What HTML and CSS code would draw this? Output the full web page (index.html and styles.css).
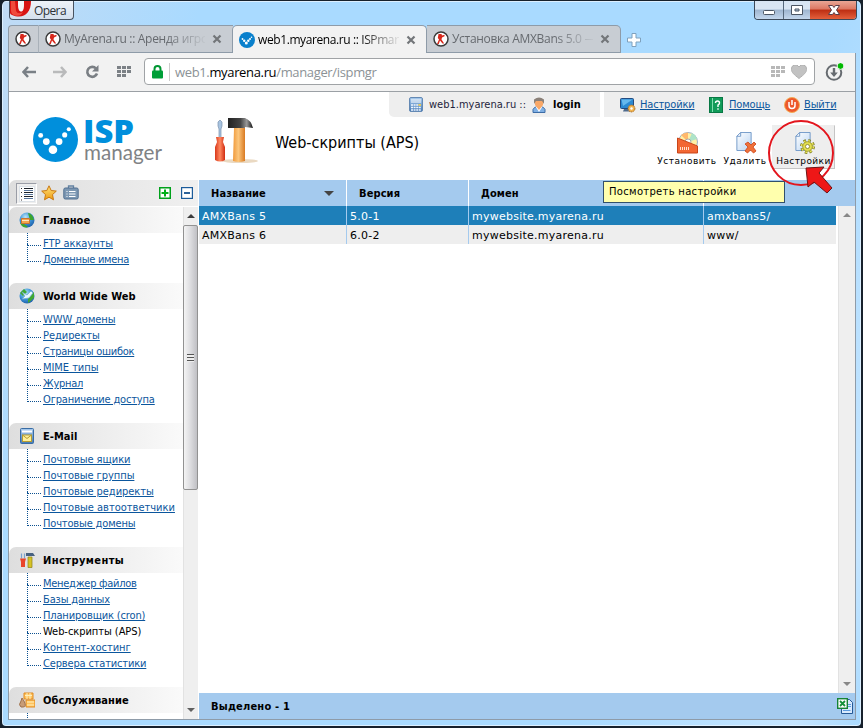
FILE: index.html
```html
<!DOCTYPE html>
<html lang="ru">
<head>
<meta charset="utf-8">
<title>ISPmanager</title>
<link rel="stylesheet" href="styles.css">
</head>
<body>
<svg width="0" height="0" class="defs" aria-hidden="true">
<defs>
<linearGradient id="wood" x1="0" x2="1"><stop offset="0" stop-color="#f09a3c"/><stop offset=".45" stop-color="#fcc67c"/><stop offset="1" stop-color="#d97a22"/></linearGradient>
<linearGradient id="redh" x1="0" x2="1"><stop offset="0" stop-color="#d8381a"/><stop offset=".5" stop-color="#ff8860"/><stop offset="1" stop-color="#d02c10"/></linearGradient>
<linearGradient id="steel" x1="0" x2="1"><stop offset="0" stop-color="#222"/><stop offset=".5" stop-color="#444"/><stop offset=".75" stop-color="#999"/><stop offset="1" stop-color="#111"/></linearGradient>
<linearGradient id="blue" x1="0" y1="0" x2="0" y2="1"><stop offset="0" stop-color="#a9cbee"/><stop offset="1" stop-color="#4579b5"/></linearGradient>
<linearGradient id="paper" x1="0" y1="0" x2="1" y2="1"><stop offset="0" stop-color="#fff"/><stop offset="1" stop-color="#b9d4f2"/></linearGradient>
<linearGradient id="gold" x1="0" y1="0" x2="0" y2="1"><stop offset="0" stop-color="#ffe27a"/><stop offset="1" stop-color="#ee9c12"/></linearGradient>
<radialGradient id="globe" cx=".4" cy=".3" r=".8"><stop offset="0" stop-color="#b8e4f8"/><stop offset=".5" stop-color="#3c94d8"/><stop offset="1" stop-color="#1a56a0"/></radialGradient>
<symbol id="cs" viewBox="0 0 16 16"><circle cx="8" cy="8" r="7" fill="#fff" stroke="#3a3a3a" stroke-width="1.5"/><path d="M5.500 3h3l.5 1.500 2.500-.8v1.500L9 6.500l-.5 2 2.700 4H9.500L7 9.500 5.800 13H4L6 8.500 4.800 7z" fill="#d8281c"/></symbol>
<symbol id="isp" viewBox="0 0 44 44"><circle cx="22" cy="22" r="22" fill="#008fdc"/><g fill="#fff"><circle cx="7.500" cy="18" r="2.400"/><circle cx="13" cy="24" r="3.300"/><circle cx="19.500" cy="32" r="4.200"/><circle cx="25.500" cy="24" r="3.300"/><circle cx="31" cy="17.500" r="2.500"/><circle cx="35" cy="12" r="2"/></g></symbol>
<symbol id="ispfav" viewBox="0 0 16 16"><circle cx="8" cy="8" r="8" fill="#0a80cc"/><g fill="#fff"><circle cx="3.500" cy="7" r=".9"/><circle cx="5.200" cy="8.800" r="1.200"/><circle cx="7.300" cy="11" r="1.500"/><circle cx="9.300" cy="8.800" r="1.200"/><circle cx="11" cy="7" r="1"/><circle cx="12.500" cy="5.200" r=".8"/></g></symbol>
<symbol id="x" viewBox="0 0 10 10"><path d="M1.500 1.500l7 7m0-7l-7 7" stroke="#737679" stroke-width="2.200" fill="none"/></symbol>
<symbol id="grid" viewBox="0 0 14 11"><path d="M0 0h4v3H0zM5 0h4v3H5zM10 0h4v3h-4zM0 4h4v3H0zM5 4h4v3H5zM10 4h4v3h-4zM0 8h4v3H0zM5 8h4v3H5z" fill="currentColor"/></symbol>
<symbol id="page" viewBox="0 0 16 20"><path d="M4.500.5h11v19H.5V4.500z" fill="url(#paper)" stroke="#7098c8"/><path d="M4.500.5v4h-4z" fill="#fff" stroke="#7098c8"/></symbol>
<symbol id="gear" viewBox="0 0 14 14"><circle cx="7" cy="7" r="5.400" fill="none" stroke="#77771c" stroke-width="3" stroke-dasharray="2.200 2.040"/><circle cx="7" cy="7" r="5.400" fill="none" stroke="#e9e45a" stroke-width="1.600" stroke-dasharray="1.800 2.440"/><circle cx="7" cy="7" r="4.500" fill="#e4df50" stroke="#99952c" stroke-width=".8"/><circle cx="7" cy="7" r="1.900" fill="#fff" stroke="#88852c" stroke-width=".8"/></symbol>
</defs>
</svg>
<div class="window">
  <header class="titlebar">
    <div class="opera-btn"><svg width="22" height="16" viewBox="0 0 22 16"><path d="M0 0h21c0 10-5 15.500-12 15.500C4 15.500 0 13.500 0 12z" fill="#d81414"/><path d="M1 0h4l1 10q2 4 7 1-3 5-8 3.500-4-1-4-5z" fill="#f04a3c"/><path d="M8 0h6v4c0 5-1.500 6.500-3 6.500S8 8.500 8 4z" fill="#f4f7fb"/></svg><span>Opera</span></div>
    <div class="controls">
      <div class="ctl"><svg width="28" height="18"><rect x="8.500" y="9.500" width="11" height="4" rx="1" fill="#fff" stroke="#4c5664"/></svg></div>
      <div class="ctl"><svg width="26" height="18"><path d="M7.500 4.500h11v9h-11zm3.500 3.500v2h4v-2z" fill="#fff" fill-rule="evenodd" stroke="#4c5664"/></svg></div>
      <div class="ctl close"><svg width="46" height="18"><path d="M18.500 4.500h4l1.500 2 1.500-2h4l-3 4.500 3 4.500h-4l-1.500-2-1.500 2h-4l3-4.500z" fill="#fff" stroke="#5a3c46"/></svg></div>
    </div>
  </header>
  <nav class="tabs">
    <div class="tab pinned"><svg width="16" height="16"><use href="#cs"/></svg></div>
    <div class="tab"><svg width="16" height="16"><use href="#cs"/></svg><span class="tab-title">MyArena.ru :: Аренда игро</span><svg class="tx" width="10" height="10"><use href="#x"/></svg></div>
    <div class="tab active"><svg width="16" height="16"><use href="#ispfav"/></svg><span class="tab-title tight">web1.myarena.ru :: ISPmar</span><svg class="tx" width="10" height="10"><use href="#x"/></svg></div>
    <div class="tab last"><svg width="16" height="16"><use href="#cs"/></svg><span class="tab-title">Установка AMXBans 5.0 —</span><svg class="tx" width="10" height="10"><use href="#x"/></svg></div>
    <svg class="plus" width="14" height="14"><path d="M5 .5h4V5h4.500v4H9v4.500H5V9H.5V5H5z" fill="#fff" stroke="#7fa1bd"/></svg>
  </nav>
  <div class="client">
    <div class="toolbar">
      <svg class="back" width="15" height="12"><path d="M6 1L1.500 6 6 11M2 6h12" fill="none" stroke="#7a8086" stroke-width="2.500"/></svg>
      <svg class="fwd" width="15" height="12"><path d="M9 1l4.500 5L9 11M13 6H1" fill="none" stroke="#b9babb" stroke-width="2.500"/></svg>
      <svg class="reload" width="14" height="14"><path d="M11 3.500A5 5 0 1 0 12 8.500" fill="none" stroke="#7a7f84" stroke-width="2.600"/><path d="M13.500 0v6.500H7z" fill="#7a7f84"/></svg>
      <svg class="dial" width="14" height="11"><use href="#grid"/></svg>
      <div class="address">
        <svg class="lock" width="11" height="14"><path d="M2.500 6V4a3 3 0 0 1 6 0v2" fill="none" stroke="#009632" stroke-width="2"/><rect y="5.500" width="11" height="8" rx="1" fill="#009f38"/></svg>
        <span class="url">web1.<b>myarena.ru</b>/manager/ispmgr</span>
        <svg class="dial2" width="14" height="11"><use href="#grid"/></svg>
        <svg width="16" height="14"><path d="M8 13.500C3 9.500.5 7.500.5 4.500A4 4 0 0 1 8 2a4 4 0 0 1 7.500 2.500c0 3-2.500 5-7.500 9z" fill="#c2c2c2" stroke="#b0b0b0"/></svg>
      </div>
      <svg class="download" width="19" height="18"><circle cx="9" cy="9.500" r="7.300" fill="none" stroke="#666b70" stroke-width="2"/><path d="M7.800 5h2.400v4.500h2.600L9 14 5.200 9.500h2.600z" fill="#666b70"/><circle cx="15.500" cy="3" r="3.400" fill="#00b900" stroke="#f2f2f2"/></svg>
    </div>
    <div class="page">
      <div class="top">
        <svg class="logo" width="135" height="50"><use href="#isp" x="1" y="0" width="45" height="45"/><text x="51" y="26" class="logo-isp" textLength="51" lengthAdjust="spacingAndGlyphs">ISP</text><text x="52" y="43" class="logo-man" textLength="78" lengthAdjust="spacingAndGlyphs">manager</text></svg>
        <svg class="tools" width="46" height="50" viewBox="0 0 46 50"><ellipse cx="27" cy="44" rx="18" ry="2" fill="#ead9c2"/><path d="M21 11h11v33q-6 2-12 0z" fill="url(#wood)"/><path d="M15 1h17q6 2 8 10l-8-1v1H15z" fill="url(#steel)"/><path d="M5 5l2-2 2 2v4l-1 3v10H6V12L5 9z" fill="#a8c4e0" stroke="#7890ae" stroke-width=".7"/><path d="M3 20h8l-1 5 2 5v13q-5 3-10 0V30l2-5z" fill="url(#redh)"/></svg>
        <h1>Web-скрипты (APS)</h1>
        <div class="right">
          <div class="userbar">
            <div class="ub who">
              <svg class="calc" width="14" height="15"><rect x=".5" y=".5" width="13" height="14" rx="1.500" fill="url(#blue)" stroke="#6489b4"/><path d="M2 3h10M2 5h10" stroke="#fff"/><path d="M2 8h10M2 10.500h10M2 13h10" stroke="#eff6fe" stroke-width="1.500" stroke-dasharray="2 .6"/><path d="M9.500 8H12" stroke="#efc62c" stroke-width="1.500"/></svg>
              <span>web1.myarena.ru ::</span>
              <svg width="14" height="16"><path d="M1 15.500v-3Q2 10 5 9.500h4q3 .5 4 3v3z" fill="#80b0e4" stroke="#3c6ca6"/><path d="M3.500 9.500L7 15l3.500-5.500z" fill="#fff"/><path d="M3 4h8v4l-4 5-4-5z" fill="#f9a868"/><path d="M2 7V2.500Q7-1.500 12 2.500V7L10 4H4z" fill="#8b8078"/></svg>
              <b>login</b>
            </div>
            <div class="ub links">
              <svg width="16" height="16"><rect x=".5" y="1.500" width="13" height="10" rx="1" fill="#2b89d2" stroke="#234b80"/><path d="M1.500 2.500h11L3 9z" fill="#67b9ed"/><path d="M4 12h6l1 2.500H3z" fill="#506b8c"/><circle cx="11.500" cy="11.500" r="3.400" fill="#f1b450" stroke="#a76b28" stroke-dasharray="1.500 .7"/><circle cx="11.500" cy="11.500" r="1.200" fill="#fff"/></svg><a class="l1">Настройки</a>
              <svg width="14" height="16"><rect x=".5" y=".5" width="13" height="15" fill="#119b59" stroke="#087844"/><path d="M3.500 1v14" stroke="#80dfaf"/><path d="M6.500 6Q6.500 4 8.500 4t2 2q0 1.200-1.500 2v2m0 1.200v1.500" fill="none" stroke="#fff" stroke-width="1.400"/></svg><a class="l2">Помощь</a>
              <svg width="16" height="16"><circle cx="8" cy="8" r="7.500" fill="#ed582c" stroke="#f4ab55"/><path d="M5 5v3.500a3 3 0 0 0 6 0V5M8 3v5" fill="none" stroke="#fff" stroke-width="1.500"/></svg><a class="l3">Выйти</a>
            </div>
          </div>
          <div class="actions">
            <div class="act a1"><svg width="24" height="24"><circle cx="13" cy="11" r="9.500" fill="#fff0a5" stroke="#9eb0c8"/><path d="M13 11L6 4a10 10 0 0 1 7-2.500z" fill="#ffb86c"/><path d="M13 11l4-9q4 2 5 6z" fill="#aee4c8"/><circle cx="13" cy="11" r="3" fill="#fff" stroke="#aaa"/><path d="M2.500 7l20 8v7h-20z" fill="#f36733" stroke="#c94519"/><path d="M5 17.500h9" fill="none" stroke="#ffe3d0" stroke-width="3" stroke-dasharray="1 1"/></svg><span>Установить</span></div>
            <div class="act a2"><svg width="24" height="24"><use href="#page" x="3" y="1" width="16" height="19"/><path d="M12 13l3-2 3 3 3-3 2 2-3 3 3 4-2.500 2-3-3-3 3-2.500-2 3-4z" fill="#ef713a" stroke="#cd4317" stroke-width=".8"/></svg><span>Удалить</span></div>
            <div class="act a3"><svg width="24" height="24"><use href="#page" x="3" y="1" width="16" height="19"/><use href="#gear" x="8" y="8" width="15" height="15"/></svg><span>Настройки</span></div>
          </div>
        </div>
      </div>
      <div class="body">
        <aside class="sidebar">
          <div class="side-tools">
            <div class="pressed"><svg width="16" height="16"><rect x=".5" y=".5" width="15" height="15" fill="#fff" stroke="#dce2e8"/><path d="M5 2.500h9M5 6.500h9M5 10.500h9" stroke="#1d2228" stroke-width="1"/><path d="M5 4.500h9M5 8.500h9M5 12.500h9" stroke="#59789e"/><path d="M2 2.500h1M2 6.500h1M2 10.500h1M2 14h1" stroke="#333"/></svg></div>
            <svg width="16" height="16"><path d="M8 .8l2.200 4.700 5.100.6-3.800 3.500 1 5.200L8 12.200l-4.500 2.600 1-5.200L.7 6.100l5.100-.6z" fill="url(#gold)" stroke="#c97811"/></svg>
            <svg width="16" height="16"><path d="M5.500 3V1h5v2" fill="none" stroke="#6483a2" stroke-width="1.300"/><rect x=".8" y="3" width="14.400" height="11" rx="1.500" fill="#7c97b2" stroke="#506f90"/><path d="M3.500 6.500h1m1.500 0h6.500M3.500 9h1M6 9h6.500M3.500 11.500h1m1.500 0h6.500" stroke="#fff"/></svg>
            <svg class="pm" width="12" height="12"><rect x=".75" y=".75" width="10.500" height="10.500" fill="#fff" stroke="#00a11b" stroke-width="1.500"/><path d="M6 2.500v7M2.500 6h7" stroke="#00b018" stroke-width="2"/></svg>
            <svg width="12" height="12"><rect x=".6" y=".6" width="10.800" height="10.800" fill="#fff" stroke="#1b5b9a" stroke-width="1.200"/><path d="M3 6h6" stroke="#2c6299" stroke-width="2"/></svg>
          </div>
          <div class="side-scroll">
            <div class="tree">
              <section><h2><svg width="16" height="16"><circle cx="8" cy="8" r="7.500" fill="url(#globe)"/><path d="M9 1q5 1 6 7h-4zM1 11l4 1 4 3Q4 17 1 11z" fill="#3da52e"/><path d="M2.500 6.500h8v5h-8z" fill="#f3a64d" stroke="#c97430"/><path d="M3 8.500h7" stroke="#ffe8c0"/></svg>Главное</h2>
                <ul><li><a>FTP аккаунты</a></li><li><a class="tighter">Доменные имена</a></li></ul></section>
              <section><h2><svg width="16" height="16"><circle cx="8" cy="8" r="7.500" fill="url(#globe)"/><path d="M1 5L5 1l3 3-4 4zM9 10l6-6v6l-6 5z" fill="#40a831"/><path d="M3 4l5 3 4-4 2 2-4 5-7 1 3-3z" fill="#e8f7ff" stroke="#6da8cf" stroke-width=".7"/></svg>World Wide Web</h2>
                <ul><li><a class="wider">WWW домены</a></li><li><a>Редиректы</a></li><li><a class="tighter">Страницы ошибок</a></li><li><a>MIME типы</a></li><li><a class="tighter">Журнал</a></li><li><a class="narrow">Ограничение доступа</a></li></ul></section>
              <section><h2><svg width="16" height="16"><rect x="1.500" y=".5" width="13" height="15" rx="1" fill="url(#blue)" stroke="#396ca4"/><path d="M3 3.500h10" stroke="#fff" stroke-width="2"/><rect x="3.500" y="7" width="9" height="6.500" fill="#fff09a" stroke="#b59d31"/><path d="M3.500 7L8 10.500 12.500 7" fill="none" stroke="#b59d31"/></svg>E-Mail</h2>
                <ul><li><a>Почтовые ящики</a></li><li><a>Почтовые группы</a></li><li><a>Почтовые редиректы</a></li><li><a class="even">Почтовые автоответчики</a></li><li><a class="narrow">Почтовые домены</a></li></ul></section>
              <section><h2 class="spaced"><svg width="16" height="16"><path d="M2.500 1.500v5M5.500 1.500v5" stroke="#7ba2d0" stroke-width="1.200"/><path d="M1 6.500h6L6 10v5H2v-5z" fill="#e9452a"/><path d="M9 5h4v10.500H9z" fill="#d6c225" stroke="#8e8119" stroke-width=".7"/><path d="M7 1h7l2 3H7z" fill="#486281"/></svg>Инструменты</h2>
                <ul><li><a class="tighter">Менеджер файлов</a></li><li><a class="narrow">Базы данных</a></li><li><a class="narrow">Планировщик (cron)</a></li><li class="current"><a>Web-скрипты (APS)</a></li><li><a>Контент-хостинг</a></li><li><a class="narrow">Сервера статистики</a></li></ul></section>
              <section><h2><svg width="16" height="16"><path d="M5 1h9v6H5zM7 8h9v7H7z" fill="#ffc35f" stroke="#e18b21"/><path d="M6 3.500h7M8 10h7M8 13h7M8 1v6m3-6v6" stroke="#fff0bc"/><path d="M3 6l2 3q3 6-1 6H2q-3-2 0-6z" fill="#c89c76" stroke="#9e704c"/></svg>Обслуживание</h2><ul class="tail"><li></li></ul></section>
            </div>
            <div class="bar"><i class="up"></i><div class="thumb"><b></b></div><i class="down"></i></div>
          </div>
        </aside>
        <main>
          <div class="thead"><div>Название<i class="sort"></i></div><div>Версия</div><div>Домен</div><div></div></div>
          <div class="listing">
            <div class="rows">
              <div class="row sel"><span>AMXBans 5</span><span>5.0-1</span><span>mywebsite.myarena.ru</span><span>amxbans5/</span></div>
              <div class="row"><span>AMXBans 6</span><span>6.0-2</span><span>mywebsite.myarena.ru</span><span>www/</span></div>
            </div>
            <div class="bar wide"><i class="up"></i><i class="down"></i></div>
          </div>
          <footer><span>Выделено - 1</span><svg width="16" height="16"><path d="M4.500 1.500h8l3 3v11h-11z" fill="#d8eafd" stroke="#245997"/><path d="M6 12.500h7.500M10 8.500h4M10 6.500h4" stroke="#5d9ce0"/><rect x=".7" y=".7" width="9.600" height="9.600" fill="#fff" stroke="#168335" stroke-width="1.400"/><path d="M3 3l5 5M8 3L3 8" stroke="#15903b" stroke-width="1.800"/></svg></footer>
        </main>
      </div>
    </div>
  </div>
  <div class="tooltip">Посмотреть настройки</div>
  <svg class="mark" width="80" height="84"><circle cx="36" cy="35" r="32" fill="none" stroke="#e3161e" stroke-width="2"/><path d="M41 50l18-1-5 6 13 15-5 5-13-11-6 5z" fill="#ee1717" stroke="#6d1515"/></svg>
</div>
</body>
</html>
```
FILE: styles.css
```css
* { box-sizing: border-box; }
body { margin: 0; background: #17212c; font-family: "DejaVu Sans Condensed", "DejaVu Sans", sans-serif; font-stretch: condensed; font-size: 11px; color: #000; }
.defs { position: absolute; }
svg { display: block; flex: none; }
.window { position: relative; width: 863px; height: 728px; padding: 0 5px 6px 6px; border: 2px solid #17212c; border-top-width: 1px; border-radius: 6px; background: linear-gradient(110deg, #c0dbf5 0, #a9daff 18%, #a9daff 75%, #c5e5ff 94%, #a9daff 100%); overflow: hidden; box-shadow: inset 0 0 0 1px #dcefff; display: flex; flex-direction: column; }

.titlebar { height: 24px; display: flex; justify-content: space-between; align-items: flex-start; flex: none; }
.opera-btn { display: flex; width: 65px; height: 19px; margin-left: 1px; border: 1px solid #485260; border-top: 0; border-radius: 0 0 4px 4px; background: linear-gradient(#eef3f9, #d4dfed); font: 12px/19px "Open Sans", sans-serif; letter-spacing: -.6px; color: #2c3138; }
.opera-btn span { margin-left: 2px; }
.controls { display: flex; margin-right: -1px; height: 19px; border: 1px solid #3b4858; border-top: 0; border-radius: 0 0 4px 4px; overflow: hidden; }
.ctl { border-right: 1px solid #56687c; background: linear-gradient(#d8e5f3 45%, #9fb6d0 50%, #c3d6ec); }
.ctl.close { border: 0; margin-left: -1px; background: linear-gradient(#e9a695 0, #dc7762 45%, #bd2e12 50%, #e4603c); }

.tabs { height: 28px; display: flex; flex: none; font: 12px/28px "Open Sans", sans-serif; color: #666a6f; }
.tab { display: flex; align-items: center; width: 194px; height: 28px; padding-left: 6px; background: #c8cdd3; border-top: 1px solid #8e9ba8; border-bottom: 1px solid #8e9ba8; }
.tab.pinned { width: 31px; border-left: 1px solid #8e9ba8; border-right: 1px solid #a9b1b9; border-radius: 4px 0 0; }
.tab.active { width: 195px; margin-left: -1px; background: #f2f2f2; border: 1px solid #8e9ba8; border-bottom: 0; border-radius: 5px 5px 0 0; color: #000; }
.tab.last { border-right: 1px solid #8e9ba8; border-radius: 0 5px 0 0; }
.tab-title { width: 141px; margin-left: 3px; overflow: hidden; white-space: nowrap; letter-spacing: -.3px; -webkit-mask-image: linear-gradient(90deg, #000 72%, transparent 102%); mask-image: linear-gradient(90deg, #000 72%, transparent 102%); }
.tab-title.tight { letter-spacing: -.4px; }
.tx { margin-left: 7px; }
.plus { margin: 8px 0 0 6px; }

.client { flex: 1; min-height: 0; display: flex; flex-direction: column; border: 1px solid #8e9ba8; border-top: 0; }
.toolbar { flex: none; height: 39px; display: flex; align-items: center; background: #f2f2f2; border-bottom: 1px solid #9ba0a5; padding: 0 0 1px 13px; }
.fwd { margin-left: 15px; }
.reload { margin-left: 18px; }
.dial { margin-left: 18px; color: #7c8186; }
.address { width: 671px; height: 27px; margin-left: 13px; display: flex; align-items: center; border: 1px solid #a0a3a6; border-radius: 4px; background: #fff; padding: 0 7px; }
.url { flex: 1; margin-left: 6px; padding-left: 5px; border-left: 1px solid #ccc; font: 13px/18px "Open Sans", sans-serif; letter-spacing: -.35px; color: #8c9296; }
.url b { font-weight: 400; color: #000; }
.dial2 { color: #b8b8b8; margin-right: 6px; }
.download { margin-left: 10px; }

.page { flex: 1; min-height: 0; background: #fff; display: flex; flex-direction: column; }
.top { height: 88px; flex: none; display: flex; }
.logo { margin: 25px 0 0 23px; }
.logo-isp { font: 800 32px "Open Sans", sans-serif; fill: #008fdc; }
.logo-man { font: 21px Lato, sans-serif; fill: #7f8285; }
.tools { margin: 25px 0 0 46px; }
h1 { margin: 41px 0 0 16px; font-size: 16px; line-height: 20px; font-weight: 400; white-space: nowrap; width: 114px; }
.right { flex: 1; display: flex; flex-direction: column; }
.userbar { display: flex; height: 25px; gap: 4px; }
.ub { display: flex; align-items: center; background: #eee; white-space: nowrap; }
.who { width: 211px; border-radius: 0 0 0 5px; padding-left: 20px; color: #1f1f3c; }
.who span { width: 97px; margin-left: 6px; margin-right: 6px; }
.who b { margin-left: 7px; color: #000; }
.links { flex: 1; padding-left: 16px; letter-spacing: -.15px; }
.links a { color: #0b569d; text-decoration: underline; margin-left: 4px; }
.links .l1 { width: 69px; }
.links .l2 { width: 55px; margin-left: 6px; }
.links .l3 { margin-left: 4px; }
.actions { display: flex; justify-content: flex-end; padding: 8px 20px 0 0; }
.act { height: 44px; width: 62px; display: flex; flex-direction: column; align-items: center; border: 1px solid transparent; padding-top: 5px; font: 9px/12px "DejaVu Sans", sans-serif; letter-spacing: .5px; white-space: nowrap; }
.a2 { width: 54px; }
.a3 { width: 63px; letter-spacing: .4px; background: #eee; border-right-color: #c5c5c5; border-bottom-color: #c5c5c5; }

.body { flex: 1; min-height: 0; display: flex; }
.sidebar { width: 189px; display: flex; flex-direction: column; margin-right: 1px; }
.side-tools { height: 26px; flex: none; margin-bottom: 1px; display: flex; align-items: center; gap: 6px; padding: 0 5px 0 7px; background: linear-gradient(90deg, #dedede, #f0f0f0); border-radius: 7px 0 0 0; }
.pressed { width: 21px; height: 21px; padding: 2px; border: 1px solid #9a9da6; border-right-color: #fff; border-bottom-color: #fff; background: #eee; margin-right: -2px; }
.pm { margin-left: auto; margin-right: 4px; }
.side-scroll { flex: 1; min-height: 0; display: flex; }
.tree { flex: 1; overflow: hidden; }
h2 { height: 26px; margin: 0; padding-left: 10px; display: flex; align-items: center; gap: 8px; font-size: 11px; font-weight: 700; letter-spacing: .05px; background: linear-gradient(90deg, #dedede, #fafafa); border-radius: 7px 0 0 0; white-space: nowrap; }
h2.spaced { letter-spacing: .42px; }
ul { list-style: none; margin: 0 0 15px 18px; padding: 3px 0 0; }
li { position: relative; height: 16px; line-height: 16px; padding-left: 16px; white-space: nowrap; }
li::before { content: ""; position: absolute; left: 0; top: -8px; width: 13px; height: 17px; border-left: 1px dotted #0b5090; border-bottom: 1px dotted #0b5090; }
li:first-child::before { top: -3px; height: 12px; }
li a { color: #0b569d; text-decoration: underline; letter-spacing: -.05px; }
li .narrow { letter-spacing: -.16px; }
li .tighter { letter-spacing: -.27px; }
li .even { letter-spacing: 0; }
li .wider { letter-spacing: -.08px; }
.current a { color: #000; text-decoration: none; }
.bar { width: 15px; display: flex; flex-direction: column; align-items: center; background: #efefef; box-shadow: inset 1px 0 #e2e2e2; }
.bar.wide { width: 17px; justify-content: space-between; }
.thumb { width: 15px; height: 265px; flex: none; border: 1px solid #929292; border-radius: 2px; background: linear-gradient(90deg, #f4f4f4, #dcdcdf 50%, #c0c0c4); display: flex; align-items: center; justify-content: center; }
.thumb b { width: 7px; height: 8px; background: repeating-linear-gradient(#555 0 1px, #eee 1px 3px); }
.up { width: 0; border: 4px solid transparent; border-top: 0; border-bottom-color: #3c3c3c; margin: 7px 0; }
.down { width: 0; border: 4px solid transparent; border-bottom: 0; border-top-color: #606060; margin: auto 0 7px; }
.wide .up { border-bottom-color: #888; }
.wide .down { border-top-color: #888; }

main { flex: 1; display: flex; flex-direction: column; }
.thead { height: 26px; flex: none; display: grid; grid-template-columns: 148px 122px 235px 1fr; background: #a4caee; font-weight: 700; letter-spacing: .1px; line-height: 24px; }
.thead div { padding: 1px 0 0 12px; border-right: 1px solid #fff; display: flex; justify-content: space-between; align-items: center; }
.thead div:last-child { border: 0; }
.sort { border: 5px solid transparent; border-bottom: 0; border-top-color: #444; margin-right: 12px; }
.listing { flex: 1; min-height: 0; display: flex; }
.rows { flex: 1; margin-right: 2px; }
.row { display: grid; grid-template-columns: 148px 122px 235px 1fr; height: 19px; line-height: 21px; background: #eee; font-family: "DejaVu Sans", sans-serif; font-stretch: normal; font-size: 11px; letter-spacing: .25px; }
.row span { height: 19px; padding-left: 3px; border-right: 1px solid #a4caee; }
.row span:last-child { border: 0; }
.row.sel { background: #1e7fb9; color: #fff; }
footer { height: 26px; flex: none; display: flex; align-items: center; justify-content: space-between; background: #a4caee; padding: 0 2px 0 12px; font-weight: 700; letter-spacing: .2px; }

.tooltip { position: absolute; left: 601px; top: 180px; width: 182px; height: 22px; border: 1px solid #31506b; background: #ffffad; font: 10px/20px "DejaVu Sans", sans-serif; letter-spacing: .3px; padding-left: 5px; white-space: nowrap; }
.mark { position: absolute; left: 763px; top: 117px; }
```
